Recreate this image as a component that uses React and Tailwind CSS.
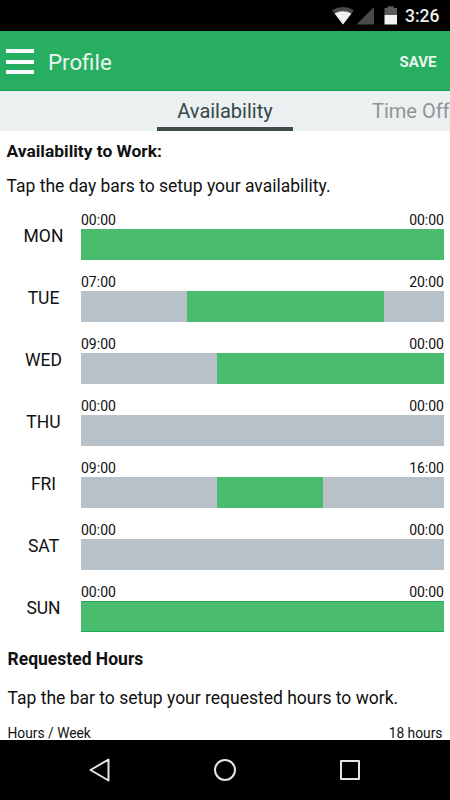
import React from "react";

const days = [
  { name: "MON", from: "00:00", to: "00:00", start: 0, end: 24 },
  { name: "TUE", from: "07:00", to: "20:00", start: 7, end: 20 },
  { name: "WED", from: "09:00", to: "00:00", start: 9, end: 24 },
  { name: "THU", from: "00:00", to: "00:00", start: 0, end: 0 },
  { name: "FRI", from: "09:00", to: "16:00", start: 9, end: 16 },
  { name: "SAT", from: "00:00", to: "00:00", start: 0, end: 0 },
  { name: "SUN", from: "00:00", to: "00:00", start: 0, end: 24, outlined: true },
];

const StatusBar = () => (
  <div className="flex h-[31px] shrink-0 items-center bg-black pl-[332px]">
    <svg className="h-[31px] w-[70px] shrink-0" viewBox="332 0 70 31">
      <path d="M332 10.2Q343 3.6 354 10.2L343 24.5Z" fill="#4a4a4a" />
      <path d="M334.6 13.5Q343 8.8 351.4 13.5L343 24.5Z" fill="#f0f0f0" />
      <path d="M374 7V24.5H356.5Z" fill="#4a4a4a" />
      <path d="M384.5 8H387.5V6.3H393.5V8H397V15H384.5Z" fill="#5a5a5a" />
      <path d="M384.5 15H397V24.5H384.5Z" fill="#f2f2f2" />
    </svg>
    <span className="ml-[3px] pt-[2px] text-[17.5px] font-medium leading-[31px] text-[#ededed]">
      3:26
    </span>
  </div>
);

const AppBar = () => (
  <header className="flex h-[60px] shrink-0 items-center border-b border-[#1aa354] bg-[#27ae60] pl-[6px] pr-[13.5px]">
    <button className="flex flex-col gap-[6.5px] pt-[2px]">
      <span className="h-[4px] w-7 bg-white" />
      <span className="h-[4px] w-7 bg-white" />
      <span className="h-[4px] w-7 bg-white" />
    </button>
    <h1 className="ml-[14px] pt-[2px] text-[22.3px] leading-[26px] text-[#e9f5ee]">Profile</h1>
    <button className="ml-auto pt-[2px] text-[15px] font-bold leading-5 text-[#e9f5ee]">
      SAVE
    </button>
  </header>
);

const Tabs = () => (
  <nav className="flex h-10 shrink-0 overflow-hidden bg-[#ecf0f1] pl-[157px] text-[20px] leading-[41px]">
    <div className="w-[136px] shrink-0 border-b-4 border-[#3c4d4d] text-center text-[#34474a]">
      Availability
    </div>
    <div className="ml-[79px] shrink-0 whitespace-nowrap text-[#8f9595]">Time Off</div>
  </nav>
);

const DayRow = ({ day }) => (
  <div className="flex h-[62.1px] pl-[6px] pr-[6px]">
    <div className="w-[75px] shrink-0 pt-[13px] text-center text-[17.5px] leading-[22px]">
      {day.name}
    </div>
    <div className="flex-1">
      <div className="flex justify-between text-[14px] leading-[17px]">
        <span>{day.from}</span>
        <span>{day.to}</span>
      </div>
      <div className="h-[31px] bg-[#b8c1c7]">
        <div
          className={`h-full bg-[#4abc6e] ${day.outlined ? "border-y border-[#1fa855]" : ""}`}
          style={{
            marginLeft: `${(day.start / 24) * 100}%`,
            width: `${((day.end - day.start) / 24) * 100}%`,
          }}
        />
      </div>
    </div>
  </div>
);

const NavBar = () => (
  <div className="flex h-[60px] shrink-0 items-center justify-center gap-[101px] bg-black">
    <svg className="size-6" viewBox="0 0 24 24" fill="none" stroke="#e6e6e6" strokeWidth="2">
      <path d="M20.5 1.5V22.5L2.5 12Z" strokeLinejoin="round" />
    </svg>
    <svg className="size-6" viewBox="0 0 24 24" fill="none" stroke="#e6e6e6" strokeWidth="2">
      <circle cx="12" cy="12" r="10" />
    </svg>
    <svg className="size-6" viewBox="0 0 24 24" fill="none" stroke="#e6e6e6" strokeWidth="2">
      <rect x="3" y="3" width="18" height="18" strokeLinejoin="round" />
    </svg>
  </div>
);

const App = () => {
  return (
    <div className="flex h-[800px] w-[450px] flex-col overflow-hidden bg-white font-['Roboto',sans-serif] text-[#111]">
      <StatusBar />
      <AppBar />
      <Tabs />
      <main className="flex-1 overflow-hidden whitespace-nowrap">
        <h2 className="pl-[6.5px] pt-[9px] text-[17.4px] font-bold leading-[22px]">Availability to Work:</h2>
        <p className="mb-[14.5px] pl-[6.5px] pt-[13px] text-[17.5px] leading-[22px]">
          Tap the day bars to setup your availability.
        </p>
        {days.map((day) => (
          <DayRow key={day.name} day={day} />
        ))}
        <h2 className="pl-[7.5px] pt-[2px] text-[17.5px] font-bold leading-[22px]">Requested Hours</h2>
        <p className="pl-[7.5px] pt-[16.5px] text-[17.5px] leading-[22px]">
          Tap the bar to setup your requested hours to work.
        </p>
        <div className="flex justify-between pl-[7.5px] pr-[7.5px] pt-[15.5px] text-[13.8px] leading-[18px]">
          <span>Hours / Week</span>
          <span>18 hours</span>
        </div>
      </main>
      <NavBar />
    </div>
  );
};

export default App;
